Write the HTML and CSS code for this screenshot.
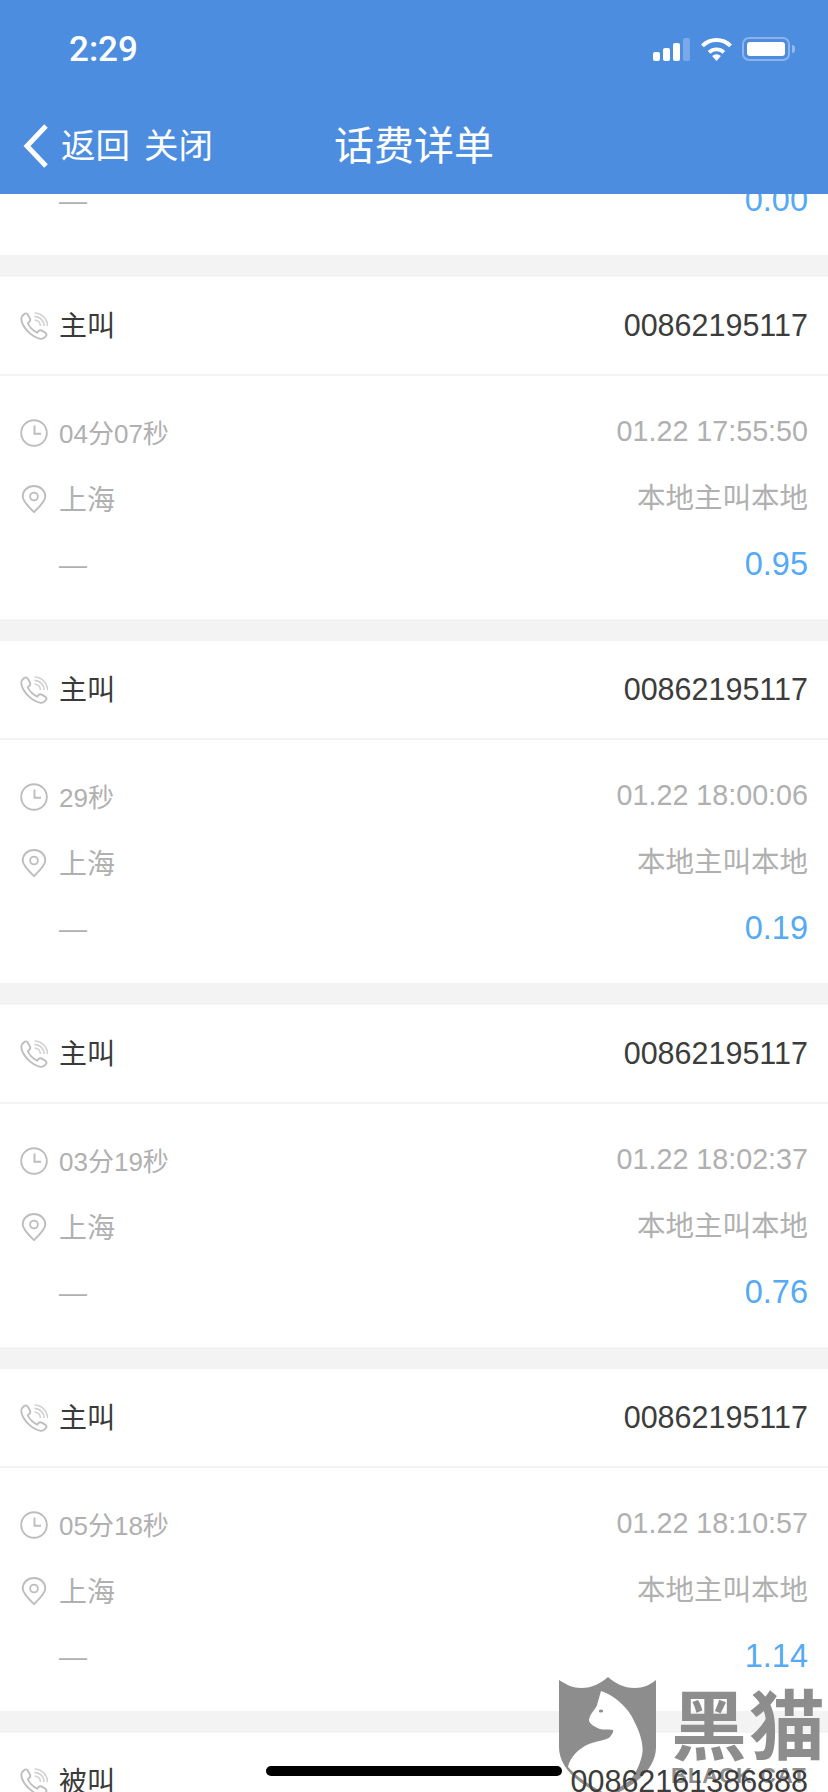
FILE: index.html
```html
<!DOCTYPE html>
<html lang="zh-CN">
<head>
    <meta charset="UTF-8">
    <meta name="viewport" content="width=device-width, initial-scale=1.0">
    <title>话费详单</title>
    <link rel="stylesheet" href="styles.css">
</head>
<body>
    <svg class="defs" width="0" height="0">
        <symbol id="i-phone" viewBox="0 0 28 28">
            <path d="M4.6 1.8 C6 1 7.2 1.6 8 3 L10 6.6 C10.7 8 10.3 9 9.2 10 L7.8 11.2 C9 14.6 13.4 19.4 17.2 20.6 L18.4 19.2 C19.4 18.1 20.4 17.9 21.7 18.6 L25.2 20.6 C26.6 21.5 26.9 22.8 26 24 C24.6 26 22.6 27 20.6 26.8 C12.4 25.8 2.6 15.8 1.4 8 C1.1 5.6 2.4 3.2 4.6 1.8 Z" fill="none" stroke="#bdbdbd" stroke-width="1.8"/>
            <path d="M14.5 8 A6 6 0 0 1 20.5 14 M14.5 4.4 A9.6 9.6 0 0 1 24.1 14 M14.5 1 A13 13 0 0 1 27.5 14" fill="none" stroke="#d2d2d2" stroke-width="1.7"/>
        </symbol>
        <symbol id="i-clock" viewBox="0 0 28 28">
            <circle cx="14" cy="14" r="12.8" fill="none" stroke="#bdbdbd" stroke-width="1.9"/>
            <path d="M14.5 6.5 V14.8 H21" fill="none" stroke="#bdbdbd" stroke-width="1.9"/>
        </symbol>
        <symbol id="i-pin" viewBox="0 0 25 28">
            <path d="M12.5 27 C8 22.6 1.2 16.5 1.2 11.5 C1.2 5.4 6.2 1 12.5 1 C18.8 1 23.8 5.4 23.8 11.5 C23.8 16.5 17 22.6 12.5 27 Z" fill="none" stroke="#bdbdbd" stroke-width="1.9"/>
            <circle cx="12.5" cy="11.5" r="3.9" fill="none" stroke="#bdbdbd" stroke-width="1.8"/>
        </symbol>
    </svg>

    <div class="page">
        <header class="top">
            <div class="status">
                <span class="time">2:29</span>
                <div class="status-icons">
                    <div class="signal">
                        <i class="b1"></i><i class="b2"></i><i class="b3"></i><i class="b4"></i>
                    </div>
                    <svg class="wifi" width="33" height="24" viewBox="0 0 32 24">
                        <path d="M16 24 L11.6 19 A6.5 6.5 0 0 1 20.4 19 Z" fill="#fff"/>
                        <path d="M8.6 15.4 A10.8 10.8 0 0 1 23.4 15.4" fill="none" stroke="#fff" stroke-width="3.8"/>
                        <path d="M2 8.8 A19.8 19.8 0 0 1 30 8.8" fill="none" stroke="#fff" stroke-width="4"/>
                    </svg>
                    <div class="battery"><div class="battery-fill"></div></div>
                    <div class="battery-nub"></div>
                </div>
            </div>
            <nav class="nav">
                <div class="nav-left">
                    <svg class="back" width="28" height="46" viewBox="0 0 28 46">
                        <path d="M24 3 L5 23 L24 43" fill="none" stroke="#fff" stroke-width="5"/>
                    </svg>
                    <span>返回</span>
                    <span>关闭</span>
                </div>
                <div class="nav-title">话费详单</div>
                <div></div>
            </nav>
        </header>

        <main class="list">
            <section class="card">
                <div class="card-head">
                    <div class="cell"><svg class="icon"><use href="#i-phone"/></svg><span class="type">主叫</span></div>
                    <span class="num">00862195117</span>
                </div>
                <div class="card-body">
                    <div class="row"><div class="cell"><svg class="icon"><use href="#i-clock"/></svg><span class="dur">01分12秒</span></div><span class="date">01.22 17:50:11</span></div>
                    <div class="row"><div class="cell"><svg class="icon"><use href="#i-pin"/></svg><span class="place">上海</span></div><span class="area">本地主叫本地</span></div>
                    <div class="row"><div class="cell"><span class="no-icon">—</span></div><span class="fee">0.00</span></div>
                </div>
            </section>

            <section class="card">
                <div class="card-head">
                    <div class="cell"><svg class="icon"><use href="#i-phone"/></svg><span class="type">主叫</span></div>
                    <span class="num">00862195117</span>
                </div>
                <div class="card-body">
                    <div class="row"><div class="cell"><svg class="icon"><use href="#i-clock"/></svg><span class="dur">04分07秒</span></div><span class="date">01.22 17:55:50</span></div>
                    <div class="row"><div class="cell"><svg class="icon"><use href="#i-pin"/></svg><span class="place">上海</span></div><span class="area">本地主叫本地</span></div>
                    <div class="row"><div class="cell"><span class="no-icon">—</span></div><span class="fee">0.95</span></div>
                </div>
            </section>

            <section class="card">
                <div class="card-head">
                    <div class="cell"><svg class="icon"><use href="#i-phone"/></svg><span class="type">主叫</span></div>
                    <span class="num">00862195117</span>
                </div>
                <div class="card-body">
                    <div class="row"><div class="cell"><svg class="icon"><use href="#i-clock"/></svg><span class="dur">29秒</span></div><span class="date">01.22 18:00:06</span></div>
                    <div class="row"><div class="cell"><svg class="icon"><use href="#i-pin"/></svg><span class="place">上海</span></div><span class="area">本地主叫本地</span></div>
                    <div class="row"><div class="cell"><span class="no-icon">—</span></div><span class="fee">0.19</span></div>
                </div>
            </section>

            <section class="card">
                <div class="card-head">
                    <div class="cell"><svg class="icon"><use href="#i-phone"/></svg><span class="type">主叫</span></div>
                    <span class="num">00862195117</span>
                </div>
                <div class="card-body">
                    <div class="row"><div class="cell"><svg class="icon"><use href="#i-clock"/></svg><span class="dur">03分19秒</span></div><span class="date">01.22 18:02:37</span></div>
                    <div class="row"><div class="cell"><svg class="icon"><use href="#i-pin"/></svg><span class="place">上海</span></div><span class="area">本地主叫本地</span></div>
                    <div class="row"><div class="cell"><span class="no-icon">—</span></div><span class="fee">0.76</span></div>
                </div>
            </section>

            <section class="card">
                <div class="card-head">
                    <div class="cell"><svg class="icon"><use href="#i-phone"/></svg><span class="type">主叫</span></div>
                    <span class="num">00862195117</span>
                </div>
                <div class="card-body">
                    <div class="row"><div class="cell"><svg class="icon"><use href="#i-clock"/></svg><span class="dur">05分18秒</span></div><span class="date">01.22 18:10:57</span></div>
                    <div class="row"><div class="cell"><svg class="icon"><use href="#i-pin"/></svg><span class="place">上海</span></div><span class="area">本地主叫本地</span></div>
                    <div class="row"><div class="cell"><span class="no-icon">—</span></div><span class="fee">1.14</span></div>
                </div>
            </section>

            <section class="card">
                <div class="card-head">
                    <div class="cell"><svg class="icon"><use href="#i-phone"/></svg><span class="type">被叫</span></div>
                    <span class="num num-top">00862161386888</span>
                </div>
            </section>
        </main>

        <!-- watermark and home bar sit over the list -->
        <div class="mark">
            <svg class="shield" width="98" height="122" viewBox="0 0 98 122">
                <path d="M0 3 C8 8 14 11 22 11 C34 11 42 6 49 0 C56 6 64 11 76 11 C84 11 91 8 97 3 V70 C97 95 70 112 49 120 C28 112 0 95 0 70 Z" fill="#8e8d8e"/>
                <path d="M42 14 L47 16 L51 18 C64 26 72 36 76 46 C82 58 85 70 83 78 C81 88 76 98 70 104 L49 118 C34 110 20 102 9 90 C11 80 20 71 30 67 C38 64 48 63 51 60 C53 57 55 55 54 53 C48 52 44 53 41 52 C36 50 30 47 30 43 C31 36 37 32 38 28 Z" fill="#fff"/>
                <ellipse cx="42" cy="34" rx="2.2" ry="1.6" fill="#8e8d8e"/>
            </svg>
            <div class="mark-text">
                <div class="mark-cn">黑猫</div>
                <div class="mark-en">BLACK CAT</div>
            </div>
        </div>
        <div class="home-bar"></div>
    </div>
</body>
</html>
```

FILE: styles.css
```css
body {
    margin: 0;
    background-color: #f3f3f3;
    font-family: "Liberation Sans", "Noto Sans CJK SC", sans-serif;
    font-size: 28px;
    color: #b0b0b0;
}
.defs {
    display: block;
    height: 0;
}
.page {
    position: relative;
    display: flex;
    flex-direction: column;
    height: 1792px;
    overflow: hidden;
}

/* top blue bar */
.top {
    position: relative;
    z-index: 1;
    flex: none;
    height: 194px;
    background-color: #4d8de0;
    color: #fff;
}
.status {
    display: flex;
    justify-content: space-between;
    align-items: center;
    height: 98px;
    padding: 0 33px 0 69px;
}
.time {
    font-family: "Roboto", "Liberation Sans", sans-serif;
    font-size: 35px;
    font-weight: 500;
}
.status-icons {
    display: flex;
    align-items: center;
}
.signal {
    display: flex;
    align-items: flex-end;
    gap: 3px;
    height: 24px;
    margin-right: 10px;
}
.signal i {
    display: block;
    width: 7px;
    background-color: #fff;
    border-radius: 2px;
}
.signal .b1 { height: 9px; }
.signal .b2 { height: 13px; }
.signal .b3 { height: 18px; }
.signal .b4 { height: 23px; background-color: rgba(255,255,255,0.25); }
.battery {
    box-sizing: border-box;
    width: 48px;
    height: 24px;
    margin-left: 9px;
    padding: 3px;
    border: 2px solid rgba(255,255,255,0.35);
    border-radius: 7px;
}
.battery-fill {
    height: 100%;
    background-color: #fff;
    border-radius: 3px;
}
.battery-nub {
    width: 3px;
    height: 8px;
    margin-left: 2px;
    background-color: rgba(255,255,255,0.4);
    border-radius: 0 3px 3px 0;
}
.nav {
    display: grid;
    grid-template-columns: 1fr auto 1fr;
    align-items: center;
    height: 90px;
}
.nav-left {
    display: flex;
    align-items: center;
    gap: 14px;
    padding-left: 22px;
    font-size: 34.5px;
}
.back {
    margin-top: 6px;
    margin-right: -3px;
}
.nav-title {
    font-size: 40px;
}

/* list, scrolled so the first card is cut by the top bar */
.list {
    flex: 1;
    min-height: 0;
    display: flex;
    flex-direction: column;
    gap: 22px;
}
.card {
    flex: none;
    background-color: #fff;
}
.card:first-child {
    margin-top: -281px;
}
.card-head {
    box-sizing: border-box;
    display: flex;
    justify-content: space-between;
    align-items: center;
    height: 99px;
    padding: 0 20px 0 20px;
    border-bottom: 2px solid #f3f3f3;
}
.card-body {
    padding: 24px 20px 21px 20px;
}
.row {
    display: flex;
    justify-content: space-between;
    align-items: center;
    height: 66px;
}
.cell {
    display: flex;
    align-items: center;
}
.icon {
    flex: none;
    width: 28px;
    height: 28px;
    margin-right: 11px;
}
.type {
    margin-top: -4px;
    color: #3a3a3a;
}
.num {
    font-size: 30.5px;
    color: #3c3c3c;
}
.num-top {
    position: relative;
    z-index: 3;
}
.dur {
    margin-top: -4px;
    font-size: 26px;
}
.place {
    margin-top: -2px;
}
.date {
    margin-top: -4px;
    font-size: 28.7px;
}
.area {
    margin-top: -8px;
    font-size: 28.5px;
}
.no-icon {
    padding-left: 39px;
}
.fee {
    margin-top: -2px;
    font-size: 32.5px;
    color: #55a9f5;
}

/* watermark */
.mark {
    position: absolute;
    z-index: 2;
    left: 559px;
    top: 1677px;
    display: flex;
    gap: 14px;
    width: 269px;
    overflow: hidden;
}
.shield {
    flex: none;
}
.mark-cn {
    margin-top: 2px;
    font-family: "Noto Sans CJK SC", sans-serif;
    font-size: 76px;
    font-weight: 700;
    line-height: 84px;
    letter-spacing: 2px;
    white-space: nowrap;
    color: #8e8d8e;
}
.mark-en {
    font-size: 22px;
    font-weight: 700;
    line-height: 26px;
    letter-spacing: 1px;
    white-space: nowrap;
    color: #8e8d8e;
}
.home-bar {
    position: absolute;
    z-index: 4;
    left: 266px;
    top: 1766px;
    width: 296px;
    height: 10px;
    background-color: #000;
    border-radius: 5px;
}
```
